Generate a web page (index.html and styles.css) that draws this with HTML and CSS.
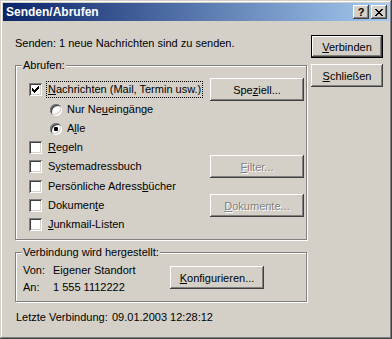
FILE: index.html
```html
<!DOCTYPE html>
<html lang="de">
<head>
    <meta charset="UTF-8">
    <title>Senden/Abrufen</title>
    <link rel="stylesheet" href="styles.css">
</head>
<body>

    <div class="window">
        <div class="titlebar">
            <span class="title">Senden/Abrufen</span>
            <div class="title-buttons">
                <span class="tbtn">?</span>
                <span class="tbtn">
                    <svg width="8" height="7" viewBox="0 0 8 7" shape-rendering="crispEdges"><path d="M0 0h2v1H0zM6 0h2v1H6zM1 1h2v1H1zM5 1h2v1H5zM2 2h4v1H2zM3 3h2v1H3zM2 4h4v1H2zM1 5h2v1H1zM5 5h2v1H5zM0 6h2v1H0zM6 6h2v1H6z"/></svg>
                </span>
            </div>
        </div>

        <div class="dialog">
            <div class="main">
                <p class="status">Senden: 1 neue Nachrichten sind zu senden.</p>

                <div class="group fetch">
                    <span class="group-label">Abrufen:</span>

                    <div class="row">
                        <label class="opt">
                            <span class="box">
                                <svg width="7" height="7" viewBox="0 0 7 7" shape-rendering="crispEdges"><path d="M0 2h1v3H0zM1 3h1v3H1zM2 4h1v3H2zM3 3h1v3H3zM4 2h1v3H4zM5 1h1v3H5zM6 0h1v3H6z"/></svg>
                            </span>
                            <span class="text focus"><u>N</u>achrichten (Mail, Termin usw.)</span>
                        </label>
                        <button class="btn">Spe<u>z</u>iell...</button>
                    </div>
                    <div class="row sub gap">
                        <label class="opt"><span class="radio"></span><span class="text">Nur Ne<u>u</u>eingänge</span></label>
                    </div>
                    <div class="row sub">
                        <label class="opt"><span class="radio on"></span><span class="text">A<u>l</u>le</span></label>
                    </div>
                    <div class="row">
                        <label class="opt"><span class="box"></span><span class="text"><u>R</u>egeln</span></label>
                    </div>
                    <div class="row">
                        <label class="opt"><span class="box"></span><span class="text">S<u>y</u>stemadressbuch</span></label>
                        <button class="btn disabled"><u>F</u>ilter...</button>
                    </div>
                    <div class="row gap">
                        <label class="opt"><span class="box"></span><span class="text">Persönliche Adress<u>b</u>ücher</span></label>
                    </div>
                    <div class="row">
                        <label class="opt"><span class="box"></span><span class="text">Dokumen<u>t</u>e</span></label>
                        <button class="btn disabled"><u>D</u>okumente...</button>
                    </div>
                    <div class="row">
                        <label class="opt"><span class="box"></span><span class="text"><u>J</u>unkmail-Listen</span></label>
                    </div>
                </div>

                <div class="group conn">
                    <span class="group-label">Verbindung wird hergestellt:</span>
                    <div class="conn-info">
                        <span>Von:</span><span>Eigener Standort</span>
                        <span>An:</span><span>1 555 1112222</span>
                    </div>
                    <button class="btn"><u>K</u>onfigurieren...</button>
                </div>

                <div class="last">
                    <span class="last-label">Letzte Verbindung:</span>
                    <span>09.01.2003 12:28:12</span>
                </div>
            </div>

            <div class="side">
                <button class="btn default"><u>V</u>erbinden</button>
                <button class="btn"><u>S</u>chließen</button>
            </div>
        </div>
    </div>

</body>
</html>
```

FILE: styles.css
```css
body {
    margin: 0;
    font-family: "Liberation Sans", Arial, sans-serif;
    font-size: 11px;
    color: #000;
}
.window {
    width: 392px;
    height: 339px;
    box-sizing: border-box;
    padding: 3px;
    background-color: #D4D0C8;
    box-shadow: inset -1px -1px 0 #404040, inset 1px 1px 0 #D4D0C8,
                inset -2px -2px 0 #808080, inset 2px 2px 0 #fff;
}
.titlebar {
    height: 18px;
    display: flex;
    align-items: center;
    justify-content: space-between;
    padding: 0 2px 0 3px;
    background: linear-gradient(90deg, #0A246A, #A6CAF0);
    color: white;
    font-weight: bold;
    font-size: 12px;
}
.title-buttons {
    display: flex;
    gap: 2px;
}
.tbtn {
    width: 16px;
    height: 14px;
    box-sizing: border-box;
    display: flex;
    align-items: center;
    justify-content: center;
    background-color: #D4D0C8;
    color: #000;
    font-size: 11px;
    box-shadow: inset -1px -1px 0 #404040, inset 1px 1px 0 #fff,
                inset -2px -2px 0 #808080, inset 2px 2px 0 #D4D0C8;
}
.dialog {
    display: flex;
}
.main {
    margin-left: 12px;
    width: 292px;
    padding-top: 16px;
}
.status {
    margin: 0;
    line-height: 13px;
}
.group {
    position: relative;
    box-sizing: border-box;
    width: 292px;
    border: 1px solid #808080;
    box-shadow: 1px 1px 0 #fff, inset 1px 1px 0 #fff;
}
.group-label {
    position: absolute;
    top: -7px;
    left: 6px;
    padding: 0 1px;
    line-height: 13px;
    background-color: #D4D0C8;
}
.fetch {
    height: 175px;
    margin-top: 15px;
    padding-top: 14px;
}
.row {
    display: flex;
    align-items: center;
    height: 19px;
    padding-left: 13px;
}
.row.sub {
    padding-left: 34px;
}
.row.gap {
    margin-top: 1px;
}
.opt {
    display: flex;
    align-items: center;
}
.text {
    padding: 0 1px;
    line-height: 13px;
}
.focus {
    padding: 1px;
    outline: 1px dotted #000;
}
.box {
    flex: none;
    width: 13px;
    height: 13px;
    box-sizing: border-box;
    display: flex;
    align-items: center;
    justify-content: center;
    margin-right: 5px;
    background-color: #fff;
    box-shadow: inset 1px 1px 0 #808080, inset -1px -1px 0 #fff,
                inset 2px 2px 0 #404040, inset -2px -2px 0 #D4D0C8;
}
.radio {
    flex: none;
    position: relative;
    width: 12px;
    height: 12px;
    margin-right: 4px;
    border-radius: 50%;
    background-color: #fff;
    box-shadow: inset 1px 1px 0 #808080, inset -1px -1px 0 #fff,
                inset 2px 2px 0 #404040, inset -2px -2px 0 #D4D0C8;
}
.radio.on::after {
    content: "";
    position: absolute;
    left: 4px;
    top: 4px;
    width: 4px;
    height: 4px;
    border-radius: 1px;
    background-color: #000;
}
.btn {
    height: 23px;
    padding: 0;
    border: none;
    box-sizing: border-box;
    font-family: inherit;
    font-size: 11px;
    color: #000;
    background-color: #D4D0C8;
    box-shadow: inset -1px -1px 0 #404040, inset 1px 1px 0 #fff,
                inset -2px -2px 0 #808080, inset 2px 2px 0 #D4D0C8;
}
.btn.default {
    border: 1px solid #000;
}
.btn.disabled {
    color: #808080;
    text-shadow: 1px 1px 0 #fff;
}
.row .btn {
    width: 94px;
    margin: 0 2px 0 auto;
}
.conn {
    height: 50px;
    margin-top: 12px;
    padding: 9px 0 0 7px;
    display: flex;
    align-items: flex-start;
}
.conn-info {
    width: 147px;
    display: grid;
    grid-template-columns: 30px auto;
    grid-auto-rows: 17px;
    align-items: center;
    line-height: 13px;
}
.conn .btn {
    width: 94px;
    margin-top: 4px;
}
.last {
    display: flex;
    margin-top: 9px;
    padding-left: 1px;
    line-height: 13px;
}
.last-label {
    width: 96px;
}
.side {
    margin-left: 4px;
    padding-top: 14px;
    display: flex;
    flex-direction: column;
    gap: 6px;
}
.side .btn {
    width: 72px;
}
```
